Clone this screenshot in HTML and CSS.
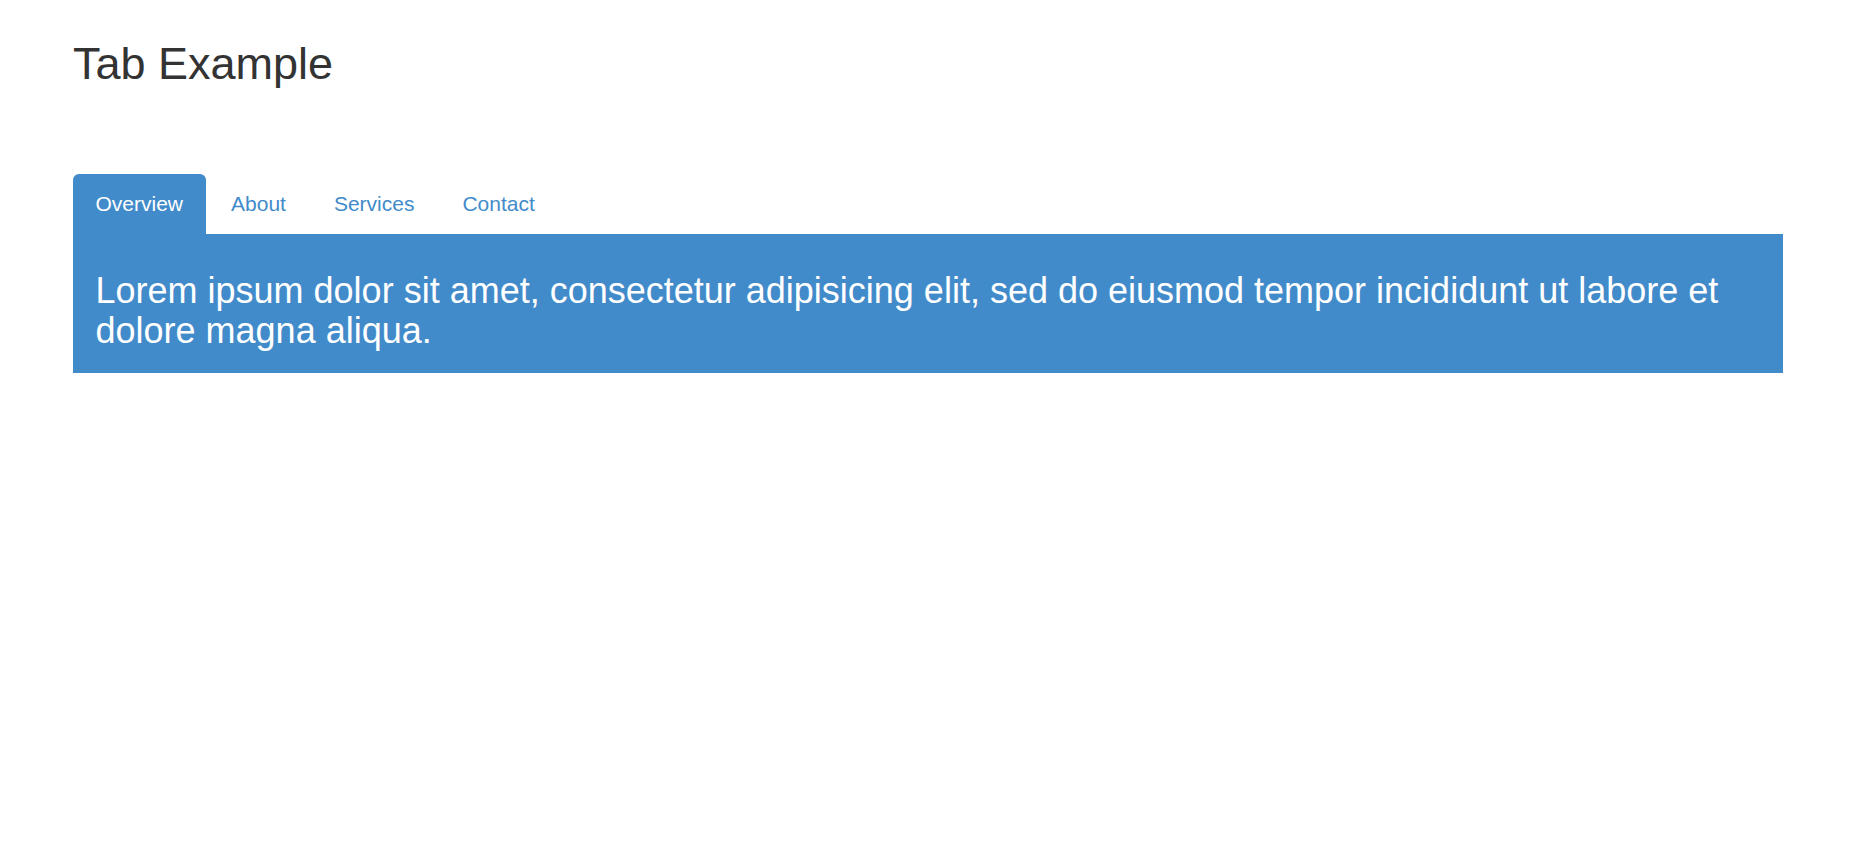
FILE: index.html
```html
<!DOCTYPE html>
<html lang="en">
<head>
<meta charset="utf-8">
<title>Tab Example</title>
<link rel="stylesheet" href="styles.css">
</head>
<body>
<div class="page">
  <h1 class="title">Tab Example</h1>
  <ul class="tabs">
    <li class="tab active"><a href="#">Overview</a></li>
    <li class="tab"><a href="#">About</a></li>
    <li class="tab"><a href="#">Services</a></li>
    <li class="tab"><a href="#">Contact</a></li>
  </ul>
  <div class="panel">
    <h3 class="panel-text">Lorem ipsum dolor sit amet, consectetur adipisicing elit, sed do eiusmod tempor incididunt ut labore et dolore magna aliqua.</h3>
  </div>
</div>
</body>
</html>
```

FILE: styles.css
```css
html, body {
  margin: 0;
  padding: 0;
  background: #fff;
}
body {
  font-family: "Liberation Sans", Arial, sans-serif;
  color: #333;
}
.page {
  padding: 0 66px 0 73px;
}
.title {
  margin: 40px 0 0 0;
  font-size: 45px;
  line-height: 48px;
  font-weight: 400;
  color: #333;
}
.tabs {
  list-style: none;
  margin: 86px 0 0 0;
  padding: 0;
  display: flex;
  gap: 3px;
}
.tab a {
  display: block;
  padding: 15px 22.5px;
  font-size: 21px;
  line-height: 29.5px;
  color: #428bca;
  text-decoration: none;
  border-radius: 6px 6px 0 0;
}
.tab.active a {
  background: #428bca;
  color: #fff;
}
.panel {
  background: #428bca;
  padding: 7.5px 22.5px;
}
.panel-text {
  margin: 30px 0 15px 0;
  font-size: 36px;
  line-height: 39.6px;
  font-weight: 400;
  color: #fff;
}
```
